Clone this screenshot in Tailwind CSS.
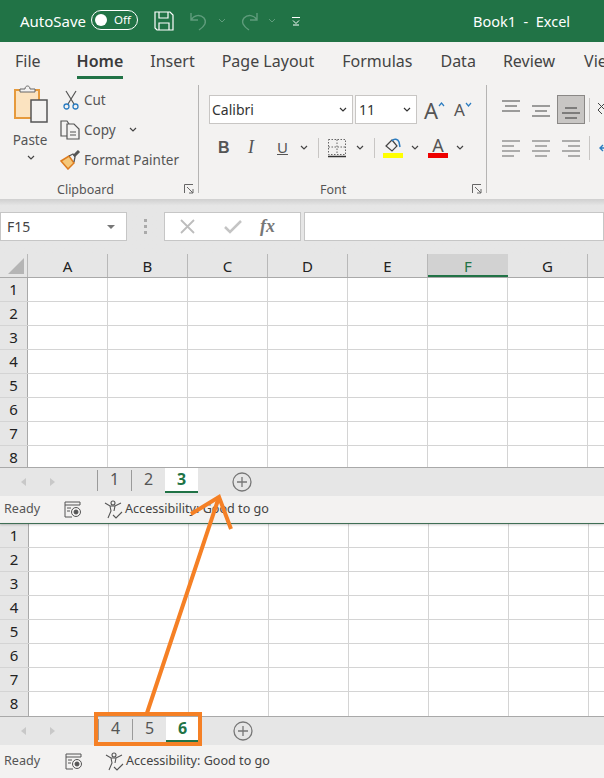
<!DOCTYPE html>
<html lang="en">
<head>
    <meta charset="UTF-8">
    <title>Book1 - Excel</title>
    <script src="https://cdn.jsdelivr.net/npm/@tailwindcss/browser@4"></script>
</head>
<body class="bg-white font-['Noto_Sans','Open_Sans',sans-serif] text-[#444]">
<div class="relative w-[604px] h-[778px] overflow-hidden">

    <!-- Title bar -->
    <div class="h-[42px] bg-[#217346] flex items-center text-white">
        <span class="ml-[20px] mt-[1px] w-[71px] text-[15px]">AutoSave</span>
        <div class="w-[47px] h-[20px] mb-[2px] rounded-full border border-white flex items-center pl-[3px]">
            <span class="w-[12px] h-[12px] rounded-full bg-white"></span>
            <span class="ml-[7px] text-[11.5px]">Off</span>
        </div>
        <svg class="ml-[16px]" width="20" height="20" viewBox="0 0 20 20" fill="none" stroke="#fff" stroke-width="1.2"><path d="M1 1h15l3 3v15H3l-2-2z"/><path d="M5 1v6h9V1M5 19v-7h10v7"/></svg>
        <svg class="ml-[15px]" width="20" height="20" viewBox="0 0 20 20" fill="none" stroke="#5f9c7c" stroke-width="1.4"><path d="M2 2v7h7M2 9c3-5 9-6 13-2 3 4 1 8-5 12"/></svg>
        <svg class="ml-[9px]" width="8" height="6" viewBox="0 0 8 6" fill="none" stroke="#5f9c7c"><path d="M1 1l3 3 3-3"/></svg>
        <svg class="ml-[13px]" width="20" height="20" viewBox="0 0 20 20" fill="none" stroke="#5f9c7c" stroke-width="1.4"><path d="M18 2v7h-7M18 9c-3-5-9-6-13-2-3 4-1 8 5 12"/></svg>
        <svg class="ml-[9px]" width="8" height="6" viewBox="0 0 8 6" fill="none" stroke="#5f9c7c"><path d="M1 1l3 3 3-3"/></svg>
        <svg class="ml-[15px]" width="10" height="10" viewBox="0 0 10 10" fill="none" stroke="#fff"><path d="M1 1.5h8M2 4.5l3 3 3-3M2 9h6"/></svg>
        <span class="ml-[172px] mt-[1px] text-[14.5px] whitespace-pre">Book1  -  Excel</span>
    </div>

    <!-- Tabs -->
    <div class="h-[38px] bg-[#f3f2f1] flex text-[16px] text-[#444] whitespace-nowrap overflow-hidden">
        <span class="ml-[15px] pt-[7px]">File</span>
        <span class="ml-[36px] pt-[7px] h-[37px] border-b-[3px] border-[#217346] font-semibold text-[#3b3b3b]">Home</span>
        <span class="ml-[27px] pt-[7px]">Insert</span>
        <span class="ml-[27px] pt-[7px]">Page Layout</span>
        <span class="ml-[28px] pt-[7px]">Formulas</span>
        <span class="ml-[28px] pt-[7px]">Data</span>
        <span class="ml-[27px] pt-[7px]">Review</span>
        <span class="ml-[29px] pt-[7px]">View</span>
    </div>

    <!-- Ribbon -->
    <div class="h-[119px] bg-[#f3f2f1] flex pt-[5px] text-[13.5px] text-[#555]">
        <!-- Clipboard -->
        <div class="relative w-[199px] h-[108px] border-r border-[#b5b4b3] flex shrink-0">
            <div class="w-[62px] flex flex-col items-center">
                <svg width="36" height="38" viewBox="0 0 36 38" fill="none">
                    <path d="M2 5h24v28H2z" fill="#fbe3c0" stroke="#e69a3c" stroke-width="2"/>
                    <path d="M7 7V4h5c0-4 5-4 5 0h5v3z" fill="#f3f2f1" stroke="#666"/>
                    <path d="M18 15h16v22H18z" fill="#f3f2f1" stroke="#555" stroke-width="1.5"/>
                </svg>
                <span class="mt-[7px] leading-[20px] pr-[2px]">Paste</span>
                <svg class="mt-[5px]" width="8" height="6" viewBox="0 0 8 6" fill="none" stroke="#444" stroke-width="1.2"><path d="M1 1l3 3 3-3"/></svg>
            </div>
            <div class="flex flex-col">
                <div class="h-[30px] flex items-center">
                    <svg width="18" height="20" viewBox="0 0 18 20" fill="none"><path d="M4 1l8 13M14 1L6 14" stroke="#555" stroke-width="1.2"/><circle cx="4.500" cy="16.500" r="2.500" stroke="#2b7cc0" stroke-width="1.300"/><circle cx="13.500" cy="16.500" r="2.500" stroke="#2b7cc0" stroke-width="1.300"/></svg>
                    <span class="ml-[4px]">Cut</span>
                </div>
                <div class="h-[30px] flex items-center">
                    <svg class="-ml-[2px]" width="21" height="20" viewBox="0 0 21 20" fill="none" stroke="#555" stroke-width="1.2"><path d="M7 16H1V1h6l2 3"/><path d="M7 4h7l5 5v10H7z" fill="#f3f2f1"/><path d="M10 12h6M10 15h6"/></svg>
                    <span class="ml-[3px]">Copy</span>
                    <svg class="ml-[13px]" width="8" height="6" viewBox="0 0 8 6" fill="none" stroke="#444" stroke-width="1.2"><path d="M1 1l3 3 3-3"/></svg>
                </div>
                <div class="h-[30px] flex items-center">
                    <svg class="-ml-[2px]" width="21" height="20" viewBox="0 0 21 20" fill="none"><path d="M1 11l8-5 5 7-6 6z" fill="#f5c87a" stroke="#dd7b1f" stroke-width="1.500"/><path d="M9 6l4-2 2 3-1 5" stroke="#555" stroke-width="1.300"/><path d="M14 6l5-5" stroke="#555" stroke-width="3"/></svg>
                    <span class="ml-[3px]">Format Painter</span>
                </div>
            </div>
            <span class="absolute left-[57px] top-[96px] text-[12.5px]">Clipboard</span>
            <svg class="absolute left-[184px] top-[99px]" width="10" height="10" viewBox="0 0 10 10" fill="none" stroke="#666"><path d="M.5 9V.5H9M3 3l6 6M9 5v4H5"/></svg>
        </div>

        <!-- Font -->
        <div class="relative w-[288px] h-[108px] border-r border-[#b5b4b3] shrink-0 pl-[10px] pt-[10px]">
            <div class="flex items-center h-[29px]">
                <div class="w-[144px] h-[29px] bg-white border border-[#c8c6c4] flex items-center justify-between pl-[2px] pr-[5px] text-[14px] text-[#333]">
                    <span>Calibri</span>
                    <svg width="8" height="6" viewBox="0 0 8 6" fill="none" stroke="#333" stroke-width="1.2"><path d="M1 1l3 3 3-3"/></svg>
                </div>
                <div class="ml-[2px] w-[62px] h-[29px] bg-white border border-[#c8c6c4] flex items-center justify-between pl-[3px] pr-[5px] text-[14px] text-[#333]">
                    <span>11</span>
                    <svg width="8" height="6" viewBox="0 0 8 6" fill="none" stroke="#333" stroke-width="1.2"><path d="M1 1l3 3 3-3"/></svg>
                </div>
                <span class="ml-[7px] text-[22px] leading-none">A</span>
                <svg class="mb-[10px]" width="7" height="5" viewBox="0 0 7 5" fill="none" stroke="#2b7cc0" stroke-width="1.2"><path d="M1 4l2.500-3L6 4"/></svg>
                <span class="ml-[9px] text-[17px] leading-none">A</span>
                <svg class="mb-[10px]" width="7" height="5" viewBox="0 0 7 5" fill="none" stroke="#2b7cc0" stroke-width="1.2"><path d="M1 1l2.500 3L6 1"/></svg>
            </div>
            <div class="flex items-center h-[29px] mt-[9px]">
                <span class="ml-[9px] w-[30px] font-['Liberation_Sans'] font-bold text-[16px]">B</span>
                <span class="w-[29px] font-['Liberation_Serif'] italic text-[18px]">I</span>
                <span class="w-[23px] underline text-[15px]">U</span>
                <svg width="8" height="6" viewBox="0 0 8 6" fill="none" stroke="#444" stroke-width="1.2"><path d="M1 1l3 3 3-3"/></svg>
                <span class="ml-[10px] w-px h-[20px] bg-[#c8c6c4]"></span>
                <svg class="ml-[8px]" width="20" height="20" viewBox="0 0 20 20" fill="none" stroke="#666"><path d="M1.500 1.500h17v15h-17zM10 1.500v15M1.500 9h17" stroke-dasharray="1.500 1.500"/><path d="M1 18.500h18" stroke="#333" stroke-width="1.500"/></svg>
                <svg class="ml-[9px]" width="8" height="6" viewBox="0 0 8 6" fill="none" stroke="#444" stroke-width="1.2"><path d="M1 1l3 3 3-3"/></svg>
                <span class="ml-[10px] w-px h-[20px] bg-[#c8c6c4]"></span>
                <div class="ml-[8px] w-[20px] flex flex-col items-center">
                    <svg width="18" height="15" viewBox="0 0 18 15" fill="none"><path d="M2 8l6-6 5 6-5 5z" stroke="#444" stroke-width="1.2"/><path d="M8 3c2-3 6-2 7 1l1 5" stroke="#2b7cc0" stroke-width="1.500"/></svg>
                    <span class="w-[20px] h-[5px] bg-[#ffff00]"></span>
                </div>
                <svg class="ml-[8px]" width="8" height="6" viewBox="0 0 8 6" fill="none" stroke="#444" stroke-width="1.2"><path d="M1 1l3 3 3-3"/></svg>
                <div class="ml-[9px] w-[20px] flex flex-col items-center">
                    <span class="text-[18px] leading-[15px] h-[15px]">A</span>
                    <span class="w-[20px] h-[5px] bg-[#ee0000]"></span>
                </div>
                <svg class="ml-[8px]" width="8" height="6" viewBox="0 0 8 6" fill="none" stroke="#444" stroke-width="1.2"><path d="M1 1l3 3 3-3"/></svg>
            </div>
            <span class="absolute left-[121px] top-[96px] text-[12.5px]">Font</span>
            <svg class="absolute left-[273px] top-[99px]" width="10" height="10" viewBox="0 0 10 10" fill="none" stroke="#666"><path d="M.5 9V.5H9M3 3l6 6M9 5v4H5"/></svg>
        </div>

        <!-- Alignment -->
        <div class="pl-[15px] pt-[10px] shrink-0">
            <div class="flex items-center h-[29px]">
                <svg class="mb-[5px]" width="18" height="14" viewBox="0 0 18 14" fill="none" stroke="#444" stroke-width="1.200"><path d="M0 1h18M3 6h12M0 11h18"/></svg>
                <svg class="ml-[12px]" width="18" height="14" viewBox="0 0 18 14" fill="none" stroke="#444" stroke-width="1.200"><path d="M0 3h18M3 8h12M0 13h18"/></svg>
                <div class="ml-[7px] w-[28px] h-[29px] bg-[#c8c6c4] border border-[#8a8886] flex items-end justify-center pb-[4px]">
                    <svg width="18" height="14" viewBox="0 0 18 14" fill="none" stroke="#333" stroke-width="1.200"><path d="M3 3h12M0 8h18M3 13h12"/></svg>
                </div>
                <span class="ml-[4px] w-px h-[24px] bg-[#c8c6c4]"></span>
                <svg class="ml-[7px] shrink-0" width="12" height="16" viewBox="0 0 12 16" fill="none" stroke="#444"><path d="M1 1l8 8M7 2L1 8l4 4"/></svg>
            </div>
            <div class="flex items-center h-[29px] mt-[9px]">
                <svg width="18" height="18" viewBox="0 0 18 18" fill="none" stroke="#666" stroke-width="1.200"><path d="M0 2h18M0 7h12M0 12h18M0 17h12"/></svg>
                <svg class="ml-[12px]" width="18" height="18" viewBox="0 0 18 18" fill="none" stroke="#666" stroke-width="1.200"><path d="M0 2h18M3 7h12M0 12h18M3 17h12"/></svg>
                <svg class="ml-[12px]" width="18" height="18" viewBox="0 0 18 18" fill="none" stroke="#666" stroke-width="1.200"><path d="M0 2h18M6 7h12M0 12h18M6 17h12"/></svg>
                <span class="ml-[9px] w-px h-[24px] bg-[#c8c6c4]"></span>
                <svg class="ml-[8px] shrink-0" width="12" height="14" viewBox="0 0 12 14" fill="none" stroke="#2b7cc0" stroke-width="1.4"><path d="M12 7H2M5 4L2 7l3 3"/></svg>
            </div>
        </div>
    </div>

    <!-- Formula bar -->
    <div class="h-[55px] bg-[#e6e6e6] bg-gradient-to-b from-[#cfcfcf] via-[#e6e6e6] via-[12%] to-[#e6e6e6] pt-[13px] flex items-start">
        <div class="w-[127px] h-[29px] bg-white border border-[#c6c6c6] flex items-center justify-between pl-[6px] pr-[11px] text-[14px] text-[#444]">
            <span>F15</span>
            <span class="w-0 h-0 border-x-[4px] border-x-transparent border-t-[4px] border-t-[#777]"></span>
        </div>
        <div class="ml-[17px] w-[4px] mt-[7px] flex flex-col gap-[3px]">
            <span class="w-[3px] h-[3px] bg-[#aaa]"></span><span class="w-[3px] h-[3px] bg-[#aaa]"></span><span class="w-[3px] h-[3px] bg-[#aaa]"></span>
        </div>
        <div class="ml-[16px] w-[137px] h-[29px] bg-white border border-[#c6c6c6] flex items-center pl-[15px]">
            <svg width="15" height="15" viewBox="0 0 15 15" fill="none" stroke="#bdbdbd" stroke-width="1.800"><path d="M1 1l13 13M14 1L1 14"/></svg>
            <svg class="ml-[29px]" width="18" height="15" viewBox="0 0 18 15" fill="none" stroke="#c4c4c4" stroke-width="2.500"><path d="M1 8l5 5L17 2"/></svg>
            <span class="ml-[18px] font-['Liberation_Serif'] italic font-bold text-[18px] text-[#777]">fx</span>
        </div>
        <div class="ml-[3px] flex-1 h-[29px] bg-white border border-[#c6c6c6]"></div>
    </div>

    <div id="top-pane"></div>
    <div class="relative h-px bg-[#3f6f55] shadow-[0_1px_2px_rgba(0,0,0,0.3)]"></div>
    <div id="bottom-pane"></div>

    <!-- Annotation -->
    <div class="absolute left-[94px] top-[712px] w-[108px] h-[34px] border-[4px] border-[#f58025]"></div>
    <svg class="absolute left-0 top-0" width="604" height="778" fill="none" stroke="#f58025" stroke-width="4">
        <path d="M147 713L219 497"/>
        <path d="M191 514L219 497L231 529"/>
    </svg>
</div>

<script>
    const COLS = ['A', 'B', 'C', 'D', 'E', 'F', 'G'];

    function renderHeader() {
        const cells = COLS.map(c => c === 'F'
            ? `<div class="w-[80px] shrink-0 bg-[#d2d2d2] border-b-[2px] border-[#217346] text-center text-[#217346] leading-[24px]">${c}</div>`
            : `<div class="w-[80px] shrink-0 border-r border-[#b8b8b8] text-center leading-[24px]">${c}</div>`).join('');
        return `<div class="flex h-[24px] bg-[#e6e6e6] border-b border-[#a9a9a9] text-[15px] text-[#222]">
            <div class="w-[28px] shrink-0 border-r border-[#b8b8b8] relative">
                <span class="absolute left-[8px] top-[4px] w-0 h-0 border-l-[16px] border-l-transparent border-b-[16px] border-b-[#b5b5b5]"></span>
            </div>${cells}<div class="flex-1"></div></div>`;
    }

    // lastHeight: the last row is cut short by the tab bar in the top pane
    function renderRows(width, lastHeight) {
        let html = '';
        for (let r = 1; r <= 8; r++) {
            const cells = COLS.map(() => '<div class="w-[80px] shrink-0 border-r border-[#d4d4d4]"></div>').join('');
            const height = r === 8 ? lastHeight : 24;
            const line = r === 8 ? '' : 'border-b border-[#d4d4d4]';
            html += `<div class="flex overflow-hidden ${line} text-[15px] text-[#222]" style="height:${height}px">
                <div class="shrink-0 bg-[#e6e6e6] border-r border-[#a9a9a9] text-center leading-[23px]" style="width:${width}px">${r}</div>${cells}</div>`;
        }
        return html;
    }

    function renderTabs(a, b, c, shift) {
        return `<div class="flex h-[29px] bg-[#e6e6e6] border-t border-[#a9a9a9] text-[16px] text-[#555]">
            <div class="shrink-0 h-[28px] flex items-center" style="width:${97 + shift}px">
                <span class="ml-[21px] w-0 h-0 border-y-[4px] border-y-transparent border-r-[5px] border-r-[#c8c8c8]"></span>
                <span class="ml-[24px] w-0 h-0 border-y-[4px] border-y-transparent border-l-[5px] border-l-[#c8c8c8]"></span>
            </div>
            <div class="w-[34px] h-[21px] mt-[2px] border-l border-[#9a9a9a] text-center leading-[19px]">${a}</div>
            <div class="w-[34px] h-[21px] mt-[2px] border-l border-[#9a9a9a] text-center leading-[19px]">${b}</div>
            <div class="w-[33px] h-[25px] bg-white border-b-[2px] border-[#217346] text-center font-bold text-[#217346] leading-[22px]">${c}</div>
            <svg class="ml-[34px] mt-[4px]" width="20" height="20" viewBox="0 0 20 20" fill="none" stroke="#777" stroke-width="1.300"><circle cx="10" cy="10" r="9"/><path d="M10 5v10M5 10h10"/></svg>
        </div>`;
    }

    function renderStatus(height, shift) {
        return `<div class="flex items-center bg-[#f3f2f1] text-[12.6px] text-[#555]" style="height:${height}px">
            <span class="ml-[4px] w-[60px]">Ready</span>
            <svg class="shrink-0" style="margin-left:${shift}px" width="18" height="17" viewBox="0 0 18 17" fill="none" stroke="#555"><path d="M1 1h15v3H1zM1 4v12h7"/><path d="M3 7h4M3 10h3"/><circle cx="12" cy="11" r="4.500"/><circle cx="12" cy="11" r="2" fill="#555"/></svg>
            <svg class="ml-[22px] shrink-0" width="19" height="20" viewBox="0 0 19 20" fill="none" stroke="#555" stroke-width="1.100"><circle cx="9" cy="3" r="2"/><path d="M1 3l5 3h5l6-3M6 6l1 5-3 7M11 6l-1 5"/><path d="M9 15l3 3 6-6"/></svg>
            <span class="ml-[2px] text-[#444] whitespace-nowrap">Accessibility: Good to go</span>
        </div>`;
    }

    document.getElementById('top-pane').innerHTML =
        renderHeader() + renderRows(28, 21) + renderTabs('1', '2', '3', 0) + renderStatus(27, 0);
    document.getElementById('bottom-pane').innerHTML =
        renderRows(29, 24) + renderTabs('4', '5', '6', 1) + renderStatus(33, 1);
</script>
</body>
</html>
